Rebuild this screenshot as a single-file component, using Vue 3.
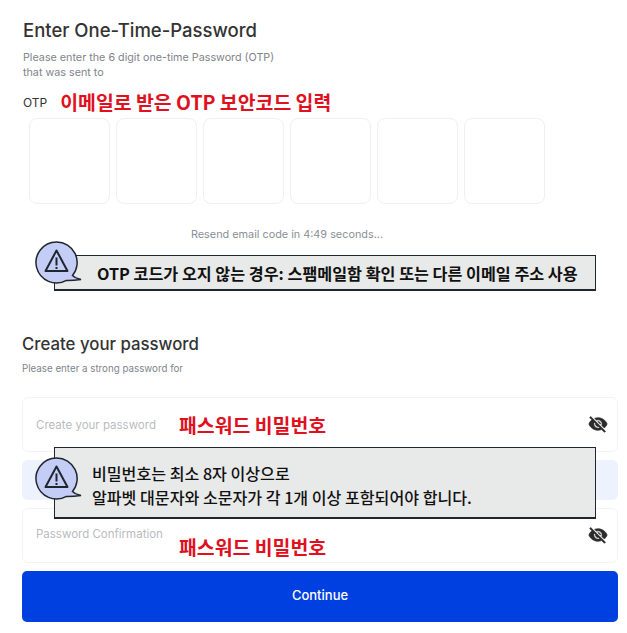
<template>
  <div class="page">
    <section class="otp-section">
      <h2 class="title">Enter One-Time-Password</h2>
      <p class="desc">Please enter the 6 digit one-time Password (OTP)<br />that was sent to</p>
      <div class="otp-label-row">
        <span class="otp-label">OTP</span>
        <span class="red-note">이메일로 받은 OTP 보안코드 입력</span>
      </div>
      <div class="otp-boxes">
        <div v-for="n in 6" :key="n" class="otp-box"></div>
      </div>
      <p class="resend">Resend email code in 4:49 seconds...</p>
    </section>

    <section class="password-section">
      <h2 class="title small">Create your password</h2>
      <p class="desc tiny">Please enter a strong password for</p>

      <div class="field first">
        <span class="placeholder">Create your password</span>
        <span class="red-note field-note">패스워드 비밀번호</span>
        <svg class="eye" viewBox="0 0 24 24"><path :d="eyeOff" /></svg>
      </div>
      <div class="hint-bar"></div>
      <div class="field second">
        <span class="placeholder">Password Confirmation</span>
        <span class="red-note field-note">패스워드 비밀번호</span>
        <svg class="eye" viewBox="0 0 24 24"><path :d="eyeOff" /></svg>
      </div>
      <button class="continue">Continue</button>
    </section>

    <div class="callout callout-otp">
      <svg class="bubble" viewBox="0 0 50 46">
        <path class="bubble-bg" :d="bubblePath" />
        <path class="bubble-mark" d="M21.500 9.500 10.500 30h22z" />
        <path class="bubble-mark" d="M21.500 16.500v8M21.500 26v2" />
      </svg>
      <span>OTP 코드가 오지 않는 경우: 스팸메일함 확인 또는 다른 이메일 주소 사용</span>
    </div>

    <div class="callout callout-password">
      <svg class="bubble" viewBox="0 0 50 46">
        <path class="bubble-bg" :d="bubblePath" />
        <path class="bubble-mark" d="M21.500 9.500 10.500 30h22z" />
        <path class="bubble-mark" d="M21.500 16.500v8M21.500 26v2" />
      </svg>
      <span>비밀번호는 최소 8자 이상으로<br />알파벳 대문자와 소문자가 각 1개 이상 포함되어야 합니다.</span>
    </div>
  </div>
</template>

<script setup>
const bubblePath =
  'M21.500 1A20.500 20.500 0 1 0 31.500 39.400Q38 39.500 46 38.500Q40 37 37.500 34.500A20.500 20.500 0 0 0 21.500 1z'
const eyeOff =
  'M12 7c2.760 0 5 2.240 5 5 0 .65-.13 1.260-.36 1.830l2.920 2.920c1.510-1.260 2.700-2.890 3.430-4.750-1.730-4.390-6-7.500-11-7.500-1.400 0-2.740.25-3.980.7l2.160 2.160C10.740 7.130 11.350 7 12 7zM2 4.270l2.280 2.280.46.46C3.080 8.300 1.780 10.020 1 12c1.730 4.390 6 7.500 11 7.500 1.550 0 3.030-.3 4.380-.84l.42.42L19.730 22 21 20.730 3.270 3 2 4.270zM7.530 9.800l1.550 1.550c-.05.21-.08.430-.08.650 0 1.660 1.340 3 3 3 .22 0 .44-.03.650-.08l1.550 1.550c-.67.33-1.410.53-2.200.53-2.760 0-5-2.240-5-5 0-.79.200-1.530.530-2.200zm4.310-.78l3.150 3.150.02-.16c0-1.660-1.340-3-3-3l-.17.010z'
</script>

<style>
html,
body {
  background: #fff;
}
</style>

<style scoped>
.page {
  position: relative;
  width: 627px;
  height: 633px;
  overflow: hidden;
  background: #fff;
  font-family: Inter, "Noto Sans CJK KR", sans-serif;
  box-sizing: border-box;
}
.otp-section {
  padding: 19px 0 0 23px;
}
.title {
  margin: 0;
  font-family: Inter, "Noto Sans CJK KR", sans-serif;
  font-size: 18.500px;
  line-height: 22px;
  font-weight: 500;
  color: #333;
}
.title.small {
  font-size: 16.800px;
}
.desc {
  margin: 9px 0 0;
  font-size: 10.750px;
  line-height: 15px;
  color: #80848c;
}
.desc.tiny {
  margin-top: 6px;
  font-size: 9.750px;
}
.otp-label-row {
  display: flex;
  align-items: center;
  gap: 13px;
  margin-top: 10px;
  height: 24px;
}
.otp-label {
  font-size: 12px;
  color: #333;
}
.red-note {
  font-family: "Noto Sans CJK KR", sans-serif;
  font-size: 19.400px;
  line-height: 24px;
  font-weight: 700;
  color: #e0101e;
  white-space: nowrap;
}
.otp-boxes {
  display: flex;
  gap: 6px;
  margin: 4px 0 0 6px;
}
.otp-box {
  width: 81px;
  height: 86px;
  box-sizing: border-box;
  border: 1px solid #f0f0f0;
  border-radius: 8px;
}
.resend {
  width: 516px;
  margin: 23px 0 0 6px;
  font-size: 10.850px;
  line-height: 14px;
  text-align: center;
  color: #8a8f96;
}
.password-section {
  display: flex;
  flex-direction: column;
  margin-top: 92px;
  padding: 0 9px 0 22px;
}
.field {
  position: relative;
  display: flex;
  height: 55px;
  box-sizing: border-box;
  padding-left: 13px;
  border: 1px solid #f3f3f3;
  border-radius: 6px;
}
.field.first {
  margin-top: 21px;
  align-items: center;
}
.field.second {
  margin-top: 8px;
}
.placeholder {
  width: 143px;
  font-size: 11.500px;
  color: #b9bbbf;
  white-space: nowrap;
}
.second .placeholder {
  margin-top: 18px;
}
.second .field-note {
  margin-top: 26px;
}
.eye {
  position: absolute;
  top: 16px;
  right: 9px;
  width: 20px;
  height: 20px;
}
.eye path {
  fill: #2b2b2b;
  stroke: #2b2b2b;
  stroke-width: 0.800;
}
.hint-bar {
  height: 40px;
  margin-top: 8px;
  background: #eef2fd;
  border-radius: 6px;
}
.continue {
  height: 51px;
  margin-top: 8px;
  padding: 0 0 3px;
  border: none;
  border-radius: 5px;
  background: #0040e0;
  color: #fff;
  font-family: Inter, sans-serif;
  font-size: 13px;
  font-weight: 500;
}
.callout {
  position: absolute;
  left: 54px;
  width: 542px;
  box-sizing: border-box;
  background: #e8e9e9;
  border: 1px solid #20262e;
  border-bottom-width: 2px;
  color: #111;
  font-family: "Noto Sans CJK KR", sans-serif;
  font-weight: 700;
  white-space: nowrap;
}
.callout-otp {
  top: 255px;
  height: 36px;
  padding-left: 42px;
  font-size: 16.200px;
  line-height: 34px;
}
.callout-password {
  top: 447px;
  height: 72px;
  padding: 13px 0 0 37px;
  font-size: 16.100px;
  font-weight: 500;
  line-height: 24px;
}
.bubble {
  position: absolute;
  left: -20px;
  top: -15px;
  width: 50px;
  height: 46px;
}
.callout-password .bubble {
  top: 9px;
}
.bubble-bg {
  fill: #c3cdf5;
  stroke: #20262e;
  stroke-width: 1.500;
}
.bubble-mark {
  fill: none;
  stroke: #20262e;
  stroke-width: 2;
  stroke-linejoin: round;
}
</style>
